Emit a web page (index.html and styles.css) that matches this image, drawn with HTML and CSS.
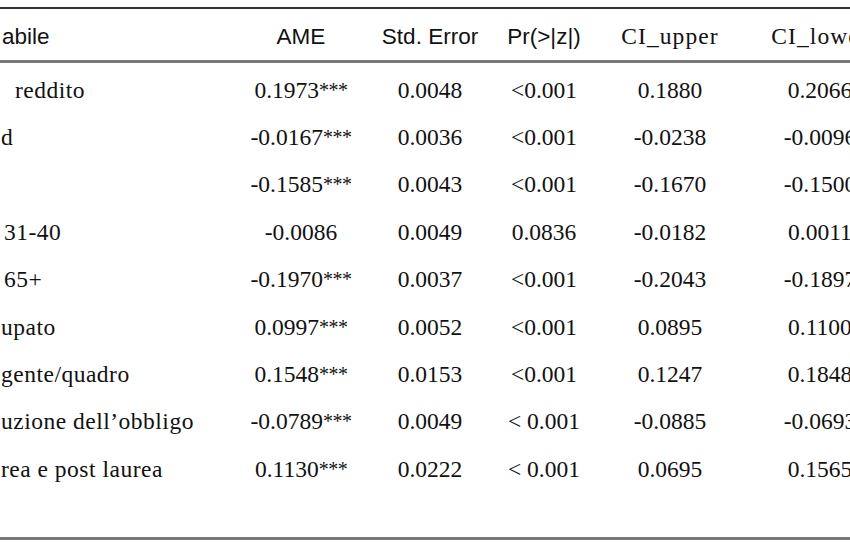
FILE: index.html
```html
<!DOCTYPE html>
<html lang="it">
<head>
<meta charset="utf-8">
<title>AME</title>
<link rel="stylesheet" href="styles.css">
</head>
<body>
<div class="frame">
  <table class="results">
    <colgroup>
      <col class="c-label">
      <col class="c-ame">
      <col class="c-se">
      <col class="c-pr">
      <col class="c-up">
      <col class="c-low">
    </colgroup>
    <thead>
      <tr>
        <th class="label sans">abile</th>
        <th class="sans">AME</th>
        <th class="sans">Std. Error</th>
        <th class="sans">Pr(&gt;|z|)</th>
        <th class="serif-head">CI_upper</th>
        <th class="serif-head">CI_lower</th>
      </tr>
    </thead>
    <tbody>
      <tr class="first">
        <td class="label pad-wide">reddito</td>
        <td>0.1973<span class="sig">***</span></td><td>0.0048</td><td>&lt;0.001</td><td>0.1880</td><td>0.2066</td>
      </tr>
      <tr>
        <td class="label">d</td>
        <td>-0.0167<span class="sig">***</span></td><td>0.0036</td><td>&lt;0.001</td><td>-0.0238</td><td>-0.0096</td>
      </tr>
      <tr>
        <td class="label"></td>
        <td>-0.1585<span class="sig">***</span></td><td>0.0043</td><td>&lt;0.001</td><td>-0.1670</td><td>-0.1500</td>
      </tr>
      <tr>
        <td class="label pad-small">31-40</td>
        <td>-0.0086</td><td>0.0049</td><td>0.0836</td><td>-0.0182</td><td>0.0011</td>
      </tr>
      <tr>
        <td class="label pad-small">65+</td>
        <td>-0.1970<span class="sig">***</span></td><td>0.0037</td><td>&lt;0.001</td><td>-0.2043</td><td>-0.1897</td>
      </tr>
      <tr>
        <td class="label">upato</td>
        <td>0.0997<span class="sig">***</span></td><td>0.0052</td><td>&lt;0.001</td><td>0.0895</td><td>0.1100</td>
      </tr>
      <tr>
        <td class="label">gente/quadro</td>
        <td>0.1548<span class="sig">***</span></td><td>0.0153</td><td>&lt;0.001</td><td>0.1247</td><td>0.1848</td>
      </tr>
      <tr>
        <td class="label">uzione dell’obbligo</td>
        <td>-0.0789<span class="sig">***</span></td><td>0.0049</td><td>&lt; 0.001</td><td>-0.0885</td><td>-0.0693</td>
      </tr>
      <tr class="last">
        <td class="label">rea e post laurea</td>
        <td>0.1130<span class="sig">***</span></td><td>0.0222</td><td>&lt; 0.001</td><td>0.0695</td><td>0.1565</td>
      </tr>
    </tbody>
  </table>
</div>
</body>
</html>
```
FILE: styles.css
```css
html, body {
  margin: 0;
  padding: 0;
  background: #ffffff;
  overflow: hidden;
}

.frame {
  padding-top: 7px;
  width: 890px;
}

.results {
  border-collapse: separate;
  border-spacing: 0;
  table-layout: fixed;
  width: 890px;
  border-top: 2px solid #333333;
  border-bottom: 3px solid #7a7a7a;
  color: #111111;
  font-family: "Liberation Serif", "Times New Roman", serif;
  font-size: 23.5px;
}

.c-label { width: 240px; }
.c-ame { width: 122px; }
.c-se { width: 136px; }
.c-pr { width: 92px; }
.c-up { width: 160px; }
.c-low { width: 140px; }

.results th {
  padding: 4px 0 0;
  line-height: 47px;
  font-weight: normal;
  text-align: center;
  white-space: nowrap;
  border-bottom: 3px solid #7a7a7a;
}

.results th.sans {
  font-family: "Liberation Sans", Arial, sans-serif;
  font-size: 22.5px;
}

.results th.serif-head {
  font-family: "Liberation Serif", "Times New Roman", serif;
  font-size: 23.5px;
  letter-spacing: 1.1px;
}

.results td {
  padding: 0;
  line-height: 47.4px;
  text-align: center;
  white-space: nowrap;
}

.results .sig {
  font-size: 0.85em;
  letter-spacing: -0.5px;
  vertical-align: 1px;
}

.results tr.first td {
  padding-top: 3.5px;
}

.results tr.last td {
  padding-bottom: 44px;
}

.results .label {
  text-align: left;
  padding-left: 1px;
}

.results th.label {
  padding-left: 2px;
}

.results td.label {
  letter-spacing: 0.5px;
}

.results td.pad-wide {
  padding-left: 15px;
}

.results td.pad-small {
  padding-left: 4px;
}
```
